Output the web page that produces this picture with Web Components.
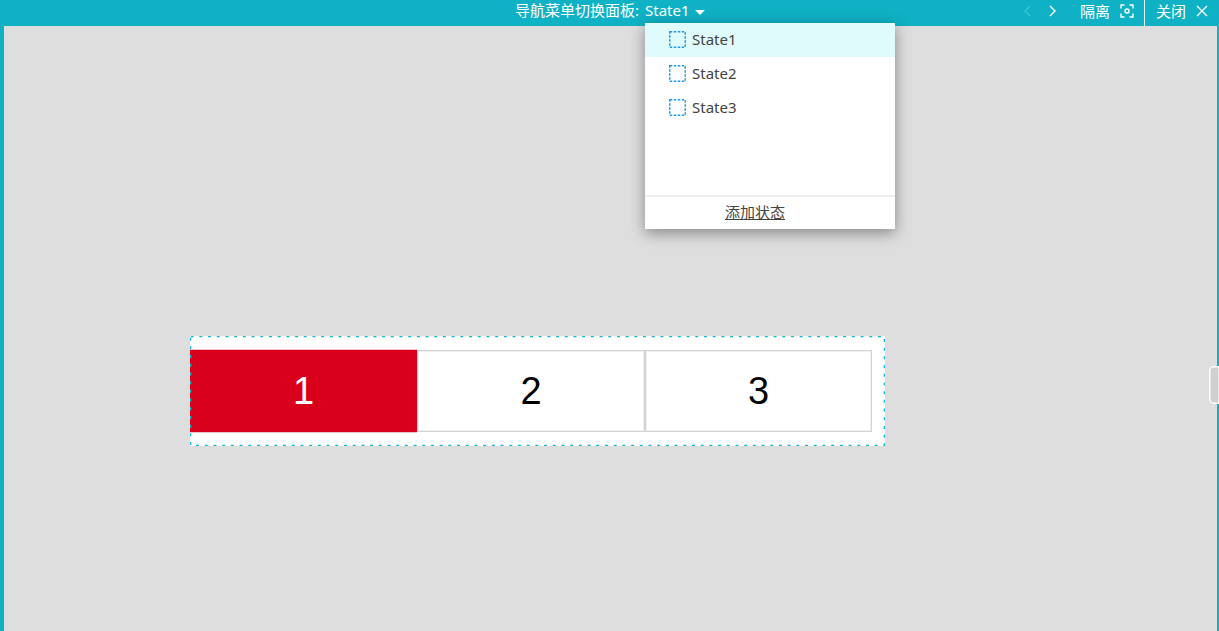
<!DOCTYPE html>
<html><head><meta charset="utf-8"><title>State editor</title>
<style>
html,body{margin:0;padding:0;height:100%;overflow:hidden;background:#dedede}
body{font-family:"Noto Sans","Noto Sans CJK SC",sans-serif}
</style></head><body>
<editor-shell>
  <top-bar slot="bar"></top-bar>
  <state-menu slot="menu"></state-menu>
  <nav-panel slot="canvas"></nav-panel>
</editor-shell>
<script>
const FONT='"Noto Sans","Noto Sans CJK SC",sans-serif';
customElements.define('editor-shell',class extends HTMLElement{constructor(){super();this.attachShadow({mode:'open'}).innerHTML=`<style>
:host{display:flex;flex-direction:column;width:1219px;height:631px;position:relative;overflow:hidden}
.main{flex:1;position:relative;background:#dedede;border-left:4px solid #0fb1c4;border-right:2px solid #0fb1c4}
.handle{position:absolute;left:1205px;top:340px;width:9px;height:36px;background:#d0d0d0;border:1px solid #fff;border-right:none;border-radius:5px 0 0 5px;box-shadow:inset 0 0 0 .5px #fff}
</style><slot name="bar"></slot><div class="main"><slot name="canvas"></slot><div class="handle"></div></div><slot name="menu"></slot>`}});

customElements.define('top-bar',class extends HTMLElement{constructor(){super();this.attachShadow({mode:'open'}).innerHTML=`<style>
:host{display:flex;align-items:center;height:26px;background:#0fb1c4;color:#fff;font:15px/20px ${FONT};flex:none;padding-left:515px;box-sizing:border-box}
.title{display:flex;align-items:center;white-space:nowrap;padding-bottom:6px}
.state{margin-left:6px}
.caret{width:0;height:0;border:5px solid transparent;border-top:5px solid #fff;border-bottom:0;margin-left:5px;margin-top:5px}
.right{margin-left:auto;display:flex;align-items:center;justify-content:flex-end;height:26px;padding-bottom:5px;box-sizing:border-box}
svg{display:block;flex:none}
.sep{width:1px;height:26px;background:#e6f8fa;margin:0 11px 0 10px;position:relative;top:2.500px}
</style>
<div class="title"><span>导航菜单切换面板:</span><span class="state">State1</span><span class="caret"></span></div>
<div class="right">
 <svg width="12" height="14" viewBox="0 0 12 14" style="margin-right:12px"><path d="M8 2 3 7l5 5" fill="none" stroke="#3cc4d4" stroke-width="1.3"/></svg>
 <svg width="12" height="14" viewBox="0 0 12 14" style="margin-right:22px"><path d="M4 2l5 5-5 5" fill="none" stroke="#fff" stroke-width="1.4"/></svg>
 <span style="margin-right:10px">隔离</span>
 <svg width="14" height="14" viewBox="0 0 14 14"><path d="M1 4.500V1h3.500M9.500 1H13v3.500M13 9.500V13H9.500M4.500 13H1V9.500" fill="none" stroke="#fff" stroke-width="1.400"/><circle cx="7" cy="7" r="2" fill="none" stroke="#fff" stroke-width="1.400"/></svg>
 <span class="sep"></span>
 <span style="margin-right:10px">关闭</span>
 <svg width="12" height="12" viewBox="0 0 12 12" style="margin-right:11px"><path d="M1 1l10 10M11 1 1 11" stroke="#fff" stroke-width="1.300"/></svg>
</div>`}});

customElements.define('state-row',class extends HTMLElement{constructor(){super();this.attachShadow({mode:'open'}).innerHTML=`<style>
:host{display:flex;align-items:center;height:34px;box-sizing:border-box;padding:0 0 2px 24px;gap:6px;color:#444;font:15px/20px ${FONT}}
:host([active]){background:#e0fbfb}
svg{display:block;flex:none}
</style><svg width="17" height="17" viewBox="0 0 17 17"><rect x=".75" y=".75" width="15.500" height="15.500" fill="none" stroke="#1f9ae8" stroke-width="1.500" stroke-dasharray="2.500 1.500"/></svg><slot></slot>`}});

customElements.define('state-menu',class extends HTMLElement{constructor(){super();this.attachShadow({mode:'open'}).innerHTML=`<style>
:host{position:absolute;left:645px;top:23px;width:250px;height:206px;background:#fff;box-shadow:0 4px 14px rgba(0,0,0,.4);display:flex;flex-direction:column;z-index:5}
.list{flex:1}
.foot{box-sizing:content-box;border-top:2px solid #eee;display:flex;align-items:center;justify-content:center;padding:0 30px 2px 0;height:30px;font:15px/20px ${FONT};color:#444}
.foot span{text-decoration:underline}
</style><div class="list"><state-row active>State1</state-row><state-row>State2</state-row><state-row>State3</state-row></div><div class="foot"><span>添加状态</span></div>`}});

customElements.define('nav-cell',class extends HTMLElement{constructor(){super();this.attachShadow({mode:'open'}).innerHTML=`<style>
:host{display:flex;align-items:center;justify-content:center;box-sizing:border-box;border:1px solid #d4d4d4;box-shadow:inset 0 0 0 1px #efefef;background:#fff;color:#000;font:38px "Liberation Sans",Arial,sans-serif;height:82px;padding-top:1px}
:host([active]){background:#d9001b;color:#fff;border:0;box-shadow:0 -1px 0 #f2c2c8,0 1px 0 #f2c2c8}
</style><slot></slot>`}});

customElements.define('nav-panel',class extends HTMLElement{constructor(){super();this.attachShadow({mode:'open'}).innerHTML=`<style>
:host{position:absolute;left:186px;top:310px;width:695px;height:110px;box-sizing:border-box;background:#fff;padding:14px 13px 14px 0}
.row{display:grid;grid-template-columns:227px 228px 227px}
svg{position:absolute;left:0;top:0}
</style><div class="row"><nav-cell active>1</nav-cell><nav-cell>2</nav-cell><nav-cell>3</nav-cell></div>
<svg width="695" height="110" viewBox="0 0 695 110"><rect x=".65" y=".65" width="693.700" height="108.700" fill="none" stroke="#0fb9cf" stroke-width="1.300" stroke-dasharray="3 5.700"/></svg>`}});
</script>
</body></html>
